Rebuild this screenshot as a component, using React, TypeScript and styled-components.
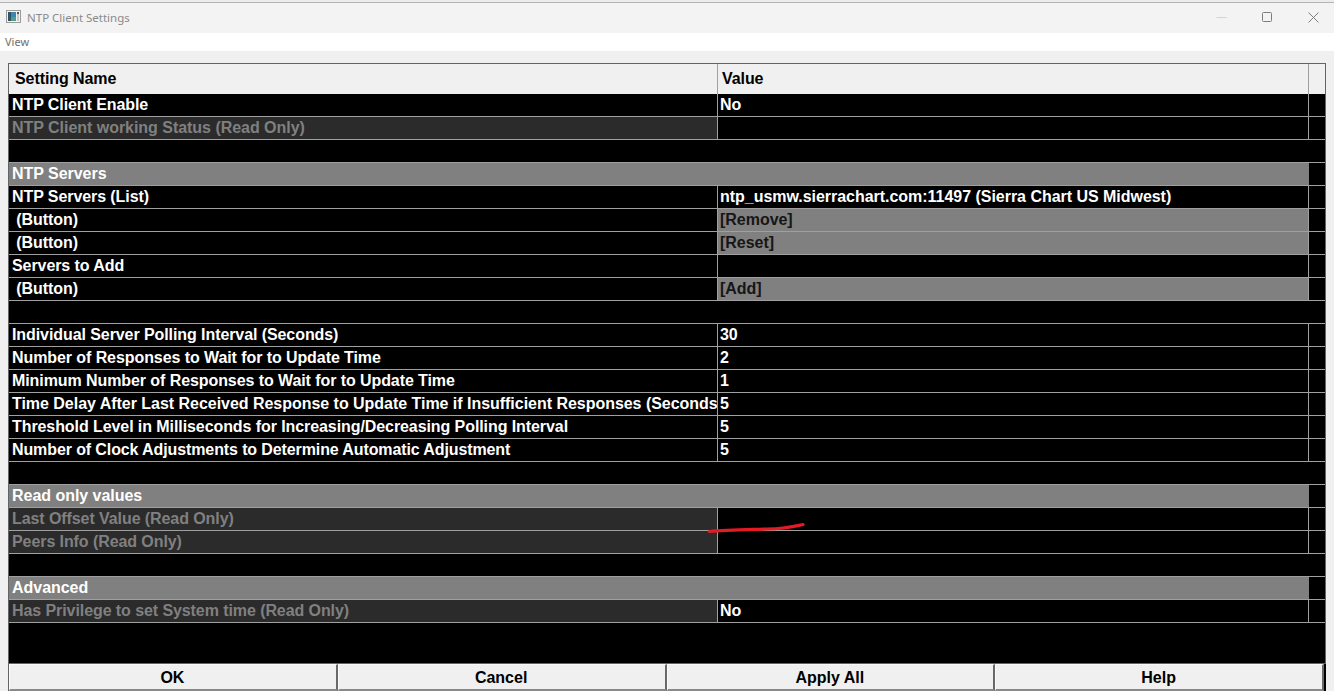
import React from 'react';
import styled, { createGlobalStyle } from 'styled-components';

const Global = createGlobalStyle`
  html, body { margin: 0; padding: 0; background: #f0f0f0; overflow: hidden; }
  body { width: 1334px; height: 691px; font-family: "Liberation Sans", Arial, sans-serif; }
`;
const Window = styled.div`
  position: relative; width: 1334px; height: 691px; background: #f0f0f0; overflow: hidden;
  display: flex; flex-direction: column;
`;
const TopEdge = styled.div`
  height: 2px; flex: none; background: #ececec; border-bottom: 1px solid #b4b4b4;
`;
const TitleBar = styled.div`
  height: 30px; flex: none; box-sizing: border-box; display: flex; align-items: center; padding: 0 0 2px 6px;
  background: #f3f3f3; color: #8a8a8a; font: 11.5px "Noto Sans", "Open Sans", sans-serif;
`;
const AppIcon = styled.svg`flex: none; margin: 0 6px 1px 0;`;
const TitleText = styled.span`flex: 1;`;
const WinBtn = styled.div`
  width: 46px; height: 28px; flex: none; box-sizing: border-box; padding-left: 5px; display: flex;
  align-items: center; justify-content: center;
`;
const MenuBar = styled.div`
  height: 18px; flex: none; background: #fff; color: #6f6f6f; padding-left: 5px;
  font: 11px/18px "Noto Sans", "Open Sans", sans-serif;
`;
const Body = styled.div`
  flex: 1; min-height: 0; padding: 12px 8px 0 8px; display: flex; flex-direction: column;
`;
const Grid = styled.div`
  flex: 1; min-height: 0; background: #000; border: 1px solid #646464; border-bottom: none;
  display: flex; flex-direction: column;
`;
const Row = styled.div<{ $h?: number }>`
  height: ${p => p.$h ?? 22}px; flex: none; display: grid;
  grid-template-columns: 709px 591px 1fr; border-bottom: 1px solid #a0a0a0;
  font: bold 16px/22px "Liberation Sans", Arial, sans-serif;
`;
const HeadCell = styled.div<{ $pad?: number; $last?: boolean }>`
  background: #f0f0f0; color: #000; padding-left: ${p => p.$pad ?? 0}px; line-height: 30px; letter-spacing: -0.08px;
  border-right: ${p => (p.$last ? 'none' : '1px solid #a0a0a0')};
`;
const Name = styled.div<{ $ro?: boolean; $spacing?: number }>`
  padding-left: 3px; white-space: pre; overflow: hidden; letter-spacing: ${p => p.$spacing ?? -0.08}px;
  border-right: 1px solid #a0a0a0;
  background: ${p => (p.$ro ? '#2b2b2b' : '#000')};
  color: ${p => (p.$ro ? '#808080' : '#fff')};
`;
const Value = styled.div<{ $btn?: boolean }>`
  padding-left: 2px; white-space: nowrap; overflow: hidden; letter-spacing: -0.03px;
  border-right: 1px solid #a0a0a0;
  background: ${p => (p.$btn ? '#808080' : '#000')};
  color: ${p => (p.$btn ? '#161616' : '#fff')};
`;
const Section = styled.div`
  grid-column: 1 / 3; background: #808080; color: #fff; padding-left: 3px; letter-spacing: -0.03px;
`;
const Spacer = styled.div`flex: 1; background: #000;`;
const Footer = styled.div`
  flex: none; height: 28px; display: flex; padding-right: 2px; background: #000;
  margin: 0 8px; border-left: 1px solid #646464; border-top: 1px solid #646464; box-sizing: border-box;
`;
const FootBtn = styled.div`
  flex: 1; background: #f0f0f0; color: #000; text-align: center; box-sizing: border-box; padding-right: 1px;
  border-top: 1px solid #fafafa; border-left: 1px solid #fafafa;
  border-right: 2px solid #696969; border-bottom: 2px solid #8a8a8a;
  font: bold 16px/25px "Liberation Sans", Arial, sans-serif;
`;
const Mark = styled.svg`position: absolute; left: 700px; top: 514px;`;

type R = { t: 'row'; name: string; value?: string; ro?: boolean; btn?: boolean; spacing?: number } | { t: 'sec'; name: string } | { t: 'blank' };
const rows: R[] = [
  { t: 'row', name: 'NTP Client Enable', value: 'No' },
  { t: 'row', name: 'NTP Client working Status (Read Only)', ro: true, spacing: -0.03 },
  { t: 'blank' },
  { t: 'sec', name: 'NTP Servers' },
  { t: 'row', name: 'NTP Servers (List)', value: 'ntp_usmw.sierrachart.com:11497 (Sierra Chart US Midwest)' },
  { t: 'row', name: ' (Button)', value: '[Remove]', btn: true },
  { t: 'row', name: ' (Button)', value: '[Reset]', btn: true },
  { t: 'row', name: 'Servers to Add' },
  { t: 'row', name: ' (Button)', value: '[Add]', btn: true },
  { t: 'blank' },
  { t: 'row', name: 'Individual Server Polling Interval (Seconds)', value: '30' },
  { t: 'row', name: 'Number of Responses to Wait for to Update Time', value: '2' },
  { t: 'row', name: 'Minimum Number of Responses to Wait for to Update Time', value: '1' },
  { t: 'row', name: 'Time Delay After Last Received Response to Update Time if Insufficient Responses (Seconds)', value: '5', spacing: -0.03 },
  { t: 'row', name: 'Threshold Level in Milliseconds for Increasing/Decreasing Polling Interval', value: '5' },
  { t: 'row', name: 'Number of Clock Adjustments to Determine Automatic Adjustment', value: '5', spacing: -0.11 },
  { t: 'blank' },
  { t: 'sec', name: 'Read only values' },
  { t: 'row', name: 'Last Offset Value (Read Only)', ro: true },
  { t: 'row', name: 'Peers Info (Read Only)', ro: true },
  { t: 'blank' },
  { t: 'sec', name: 'Advanced' },
  { t: 'row', name: 'Has Privilege to set System time (Read Only)', value: 'No', ro: true },
];

export default function App() {
  return (
    <Window>
      <Global />
      <TopEdge />
      <TitleBar>
        <AppIcon width="15" height="13" viewBox="0 0 15 13">
          <rect x="0.5" y="0.5" width="14" height="12" fill="#f4f4f4" stroke="#9a9a9a" />
          <rect x="2" y="2" width="3" height="9" fill="#2f5560" />
          <rect x="5" y="2" width="5" height="5" fill="#3f83b0" />
          <rect x="5" y="7" width="5" height="4" fill="#4f9f88" />
          <rect x="11" y="2" width="2" height="2" fill="#555" />
          <rect x="11" y="4" width="2" height="7" fill="#c8c8c8" />
        </AppIcon>
        <TitleText>NTP Client Settings</TitleText>
        <WinBtn>
          <svg width="11" height="11" viewBox="0 0 11 11"><path d="M0.5 5.5H10.5" stroke="#d4d4d4" /></svg>
        </WinBtn>
        <WinBtn>
          <svg width="11" height="11" viewBox="0 0 11 11"><rect x="0.5" y="0.5" width="9" height="9" rx="1" fill="none" stroke="#7d7d7d" /></svg>
        </WinBtn>
        <WinBtn>
          <svg width="11" height="11" viewBox="0 0 11 11"><path d="M0.5 0.5L10.5 10.5M10.5 0.5L0.5 10.5" stroke="#7d7d7d" /></svg>
        </WinBtn>
      </TitleBar>
      <MenuBar>View</MenuBar>
      <Body>
        <Grid>
          <Row $h={29}>
            <HeadCell $pad={6}>Setting Name</HeadCell>
            <HeadCell $pad={4}>Value</HeadCell>
            <HeadCell $last />
          </Row>
          {rows.map((r, i) => {
            if (r.t === 'blank') return <Row key={i} />;
            if (r.t === 'sec') return <Row key={i}><Section>{r.name}</Section></Row>;
            return (
              <Row key={i}>
                <Name $ro={r.ro} $spacing={r.spacing}>{r.name}</Name>
                <Value $btn={r.btn}>{r.value}</Value>
              </Row>
            );
          })}
          <Spacer />
        </Grid>
      </Body>
      <Footer>
        <FootBtn>OK</FootBtn>
        <FootBtn>Cancel</FootBtn>
        <FootBtn>Apply All</FootBtn>
        <FootBtn>Help</FootBtn>
      </Footer>
      <Mark width="110" height="24" viewBox="0 0 110 24">
        <path d="M9.5 17.5C30 15.5 60 15.5 78 14.5C88 14 96 12 103 10.5" stroke="#e21b24" strokeWidth="3.2" fill="none" strokeLinecap="round" />
      </Mark>
    </Window>
  );
}
